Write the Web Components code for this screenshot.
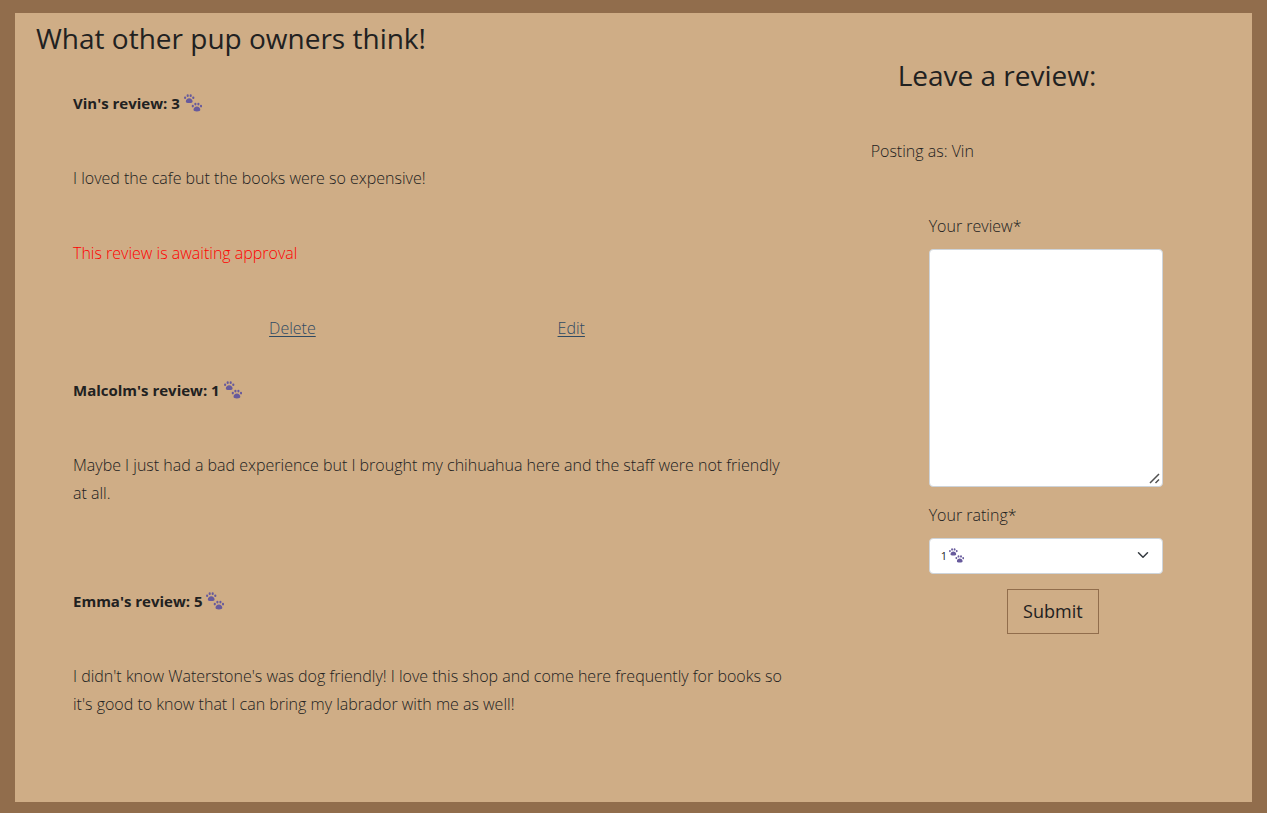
<!DOCTYPE html>
<html lang="en">
<head>
<meta charset="utf-8">
<meta name="viewport" content="width=device-width, initial-scale=1">
<title>Reviews</title>
<style>
body { margin: 0; background: #916d4c; color: #212121; font: 300 16px/28px "Open Sans", sans-serif; }
</style>
</head>
<body>
<reviews-page></reviews-page>
<script>
const define = (name, html, setup) => customElements.define(name, class extends HTMLElement {
  connectedCallback() {
    if (this.shadowRoot) return;
    this.attachShadow({ mode: 'open' }).innerHTML = html;
    if (setup) setup(this, this.shadowRoot);
  }
});

define('paw-prints', `
<style>
:host { display: inline-block; width: 18px; height: 18px; vertical-align: middle; line-height: 0; }
svg { width: 100%; height: 100%; }
</style>
<svg viewBox="0 0 18 18" fill="#675a9c" role="img" aria-label="paw prints">
<g id="paw"><path d="M5.2 4.2C7 4.2 8.6 5.6 8.6 7.4C8.6 8.7 7.4 9 5.2 9S1.8 8.7 1.8 7.4C1.8 5.6 3.4 4.2 5.2 4.2Z"/>
<ellipse cx="1.1" cy="3.7" rx="1.1" ry="1.3"/><ellipse cx="3.7" cy="1.7" rx="1.1" ry="1.4"/>
<ellipse cx="6.7" cy="1.7" rx="1.1" ry="1.4"/><ellipse cx="9.3" cy="3.7" rx="1.1" ry="1.3"/></g>
<use href="#paw" x="7.7" y="8.4"/>
</svg>`);

define('pup-review', `
<style>
:host { display: block; }
h2 { margin: 0; font-size: 15px; line-height: 28px; font-weight: 700; }
p { margin: 47px 0 0; }
.pending { color: #f00; }
paw-prints { margin-bottom: 4px; }
nav { display: grid; grid-template-columns: 1fr 1fr; margin: 47px 72px 0 80px; text-align: center; }
a { color: #2f4a63; text-underline-offset: 2px; }
</style>
<h2><span class="title"></span> <paw-prints></paw-prints></h2>
<p><slot></slot></p>`, (host, root) => {
  root.querySelector('.title').textContent = host.getAttribute('author') + "'s review: " + host.getAttribute('rating');
  if (host.hasAttribute('pending')) {
    root.querySelector('p').insertAdjacentHTML('afterend', `<p class="pending">This review is awaiting approval</p>
<nav><span><a href="#delete">Delete</a></span><span><a href="#edit">Edit</a></span></nav>`);
  }
});

define('review-form', `
<style>
:host { display: block; padding: 46px 89px 0 58px; }
* { box-sizing: border-box; }
h1 { margin: 0; font-size: 28px; line-height: 32px; font-weight: 500; }
.as { margin: 46px 0 47px -27px; }
form { margin-left: 31px; }
label { display: block; margin-bottom: 9px; }
textarea, select { display: block; width: 100%; border: 1px solid #ced4da; border-radius: 4px; background: #fff; color: #212529; }
textarea { height: 238px; margin-bottom: 14px; padding: 6px 12px; font: inherit; resize: both; }
textarea::-webkit-resizer { background: url("data:image/svg+xml,%3Csvg xmlns='http://www.w3.org/2000/svg' viewBox='0 0 15 15'%3E%3Cpath d='M3 12L12 3M8.500 12L12 8.500' stroke='%23505050' stroke-width='1.500'/%3E%3C/svg%3E") center / 15px 15px no-repeat; }
.select { position: relative; }
select { appearance: none; height: 36px; padding: 0 36px 0 11px; font: 11px/20px "Open Sans", sans-serif; }
.select paw-prints { position: absolute; left: 20px; top: 10px; width: 15px; height: 15px; pointer-events: none; }
.select svg { position: absolute; right: 14px; top: 11px; width: 12px; height: 12px; pointer-events: none; }
button { display: block; margin: 15px auto 0; padding: 7px 15px; border: 1px solid #916d4c; background: transparent; color: #212121; font: 400 18px/29px "Open Sans", sans-serif; }
.submit { padding-left: 14px; }
</style>
<h1>Leave a review:</h1>
<p class="as">Posting as: Vin</p>
<form>
<label for="body">Your review*</label>
<textarea id="body" required></textarea>
<label for="rating">Your rating*</label>
<div class="select">
<select id="rating"><option>1</option><option>2</option><option>3</option><option>4</option><option>5</option></select>
<paw-prints></paw-prints>
<svg viewBox="0 0 16 16" fill="none" stroke="#343a40" stroke-width="2" stroke-linecap="round" stroke-linejoin="round" aria-hidden="true"><path d="M2 5l6 6 6-6"/></svg>
</div>
<div class="submit"><button type="submit">Submit</button></div>
</form>`);

define('reviews-page', `
<style>
:host { display: block; padding: 13px 15px 11px; }
main { display: grid; grid-template-columns: 2fr 1fr; background: #cfad86; }
h1 { margin: 0; padding: 9px 0 0 21px; font-size: 28px; line-height: 32px; font-weight: 500; }
.list { padding: 35px 57px 84px 58px; display: flex; flex-direction: column; gap: 80px; }
pup-review[pending] { margin-bottom: -46px; }
</style>
<main>
<section>
<h1>What other pup owners think!</h1>
<div class="list">
<pup-review author="Vin" rating="3" pending>I loved the cafe but the books were so expensive!</pup-review>
<pup-review author="Malcolm" rating="1">Maybe I just had a bad experience but I brought my chihuahua here and the staff were not friendly at all.</pup-review>
<pup-review author="Emma" rating="5">I didn't know Waterstone's was dog friendly! I love this shop and come here frequently for books so it's good to know that I can bring my labrador with me as well!</pup-review>
</div>
</section>
<review-form></review-form>
</main>`);
</script>
</body>
</html>
